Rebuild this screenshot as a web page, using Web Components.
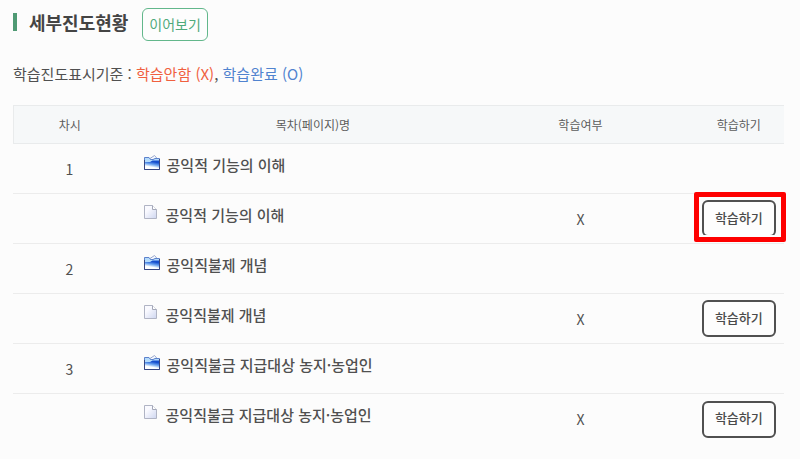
<!DOCTYPE html>
<html lang="ko">
<head>
<meta charset="utf-8">
<meta name="viewport" content="width=device-width, initial-scale=1">
<title>세부진도현황</title>
<style>
body {
    margin: 0;
    background: #fcfcfc;
    color: #505050;
    font-family: "Noto Sans CJK KR", "Noto Sans", sans-serif;
}
.missed { color: #f0603f; }
.done { color: #5083cf; }
</style>
</head>
<body>
<progress-page>
    <section-heading slot="heading">
        세부진도현황
        <outline-button slot="action" tone="green">이어보기</outline-button>
    </section-heading>
    <span slot="legend">학습진도표시기준 : <span class="missed">학습안함 (X)</span>, <span class="done">학습완료 (O)</span></span>
    <lesson-table></lesson-table>
</progress-page>

<script>
class ProgressPage extends HTMLElement {
    constructor() {
        super();
        this.attachShadow({ mode: "open" });
        this.shadowRoot.innerHTML = `
        <style>
        :host {
            display: block;
            padding: 8px 16px 12px 13px;
        }
        p {
            margin: 21px 0 19px;
            font-size: 15px;
            line-height: 24px;
        }
        </style>
        <slot name="heading"></slot>
        <p><slot name="legend"></slot></p>
        <slot></slot>
        `;
    }
}

class SectionHeading extends HTMLElement {
    constructor() {
        super();
        this.attachShadow({ mode: "open" });
        this.shadowRoot.innerHTML = `
        <style>
        :host {
            display: flex;
            align-items: flex-start;
            gap: 14px;
        }
        h2 {
            display: flex;
            align-items: center;
            gap: 12px;
            margin: 0;
            color: #444;
            font-size: 18px;
            font-weight: 700;
            line-height: 28px;
        }
        h2::before {
            content: "";
            width: 4px;
            height: 18px;
            background: #4f9a74;
        }
        </style>
        <h2><span><slot></slot></span></h2>
        <slot name="action"></slot>
        `;
    }
}

class OutlineButton extends HTMLElement {
    constructor() {
        super();
        this.attachShadow({ mode: "open" });
        this.shadowRoot.innerHTML = `
        <style>
        :host {
            display: inline-block;
            position: relative;
            vertical-align: middle;
        }
        button {
            display: block;
            box-sizing: border-box;
            height: 37px;
            padding: 0 11px 2px;
            border: 2px solid #505050;
            border-radius: 6px;
            background: #fdfdfd;
            color: #4a4a4a;
            font: 500 13px/20px "Noto Sans CJK KR", "Noto Sans", sans-serif;
            white-space: nowrap;
            cursor: pointer;
        }
        :host([tone="green"]) button {
            height: 33px;
            padding: 0 6px 2px;
            border: 1px solid #62b78b;
            color: #4faa7b;
            font-size: 14px;
            font-weight: 400;
        }
        /* red frame that calls out the next lesson */
        :host([marked])::after {
            content: "";
            position: absolute;
            inset: -8px -10px -5px -8px;
            border: 5px solid #fe0000;
            border-radius: 2px;
            box-shadow: inset 0 -2px #fdfdfd;
            pointer-events: none;
        }
        </style>
        <button type="button"><slot></slot></button>
        `;
    }
}

class LessonIcon extends HTMLElement {
    constructor() {
        super();
        this.attachShadow({ mode: "open" });
    }

    connectedCallback() {
        const folder = `
        <svg width="16" height="16" viewBox="0 0 16 16">
            <defs>
                <linearGradient id="blue" x1="0.3" y1="1" x2="0.6" y2="0">
                    <stop offset="0.25" stop-color="#ffffff"/>
                    <stop offset="0.55" stop-color="#6fa6f0"/>
                    <stop offset="0.85" stop-color="#174fce"/>
                </linearGradient>
            </defs>
            <path d="M4.5 4.5 L10.5 0.5 L14 4.5 Z" fill="#f7faff" stroke="#9aa8ce"/>
            <path d="M0.5 14.5 V2.5 H5 L6.5 4.5 H9 L11 3.5 H15.5 V14.5 Z" fill="#b5dbfb" stroke="#5d82cc"/>
            <path d="M1 7 H6 L8.5 5.5 H15 V14 H1 Z" fill="url(#blue)"/>
            <path d="M0.5 5 V14.5 H15.5 V4" fill="none" stroke="#374681"/>
        </svg>`;
        const file = `
        <svg width="14" height="16" viewBox="0 0 14 16">
            <defs>
                <linearGradient id="paper" x1="0" y1="0" x2="1" y2="1">
                    <stop offset="0.3" stop-color="#fafaff"/>
                    <stop offset="1" stop-color="#ced6f0"/>
                </linearGradient>
            </defs>
            <path d="M0.5 0.5 H8.5 L12.5 4.5 V13.5 H0.5 Z" fill="url(#paper)" stroke="#b0b4c4"/>
            <path d="M8.5 0.5 V4.5 H12.5" fill="#fff" stroke="#a4a8b8"/>
        </svg>`;
        this.shadowRoot.innerHTML = `
        <style>
        :host { display: block; flex: none; }
        svg { display: block; }
        </style>
        ${this.getAttribute("kind") === "folder" ? folder : file}
        `;
    }
}

class LessonTable extends HTMLElement {
    constructor() {
        super();
        this.attachShadow({ mode: "open" });
        this.lessons = [
            { title: "공익적 기능의 이해", state: "X", marked: true },
            { title: "공익직불제 개념", state: "X" },
            { title: "공익직불금 지급대상 농지·농업인", state: "X" },
        ];
        this.shadowRoot.innerHTML = `
        <style>
        :host { display: block; }
        table {
            width: 100%;
            table-layout: fixed;
            border-collapse: separate;
            border-spacing: 0;
        }
        .no { width: 14.6%; }
        .name { width: 48.6%; }
        .state { width: 20.8%; }
        th, td {
            box-sizing: border-box;
            padding: 0;
            text-align: center;
            vertical-align: middle;
        }
        th {
            height: 39px;
            border: solid #e9ebec;
            border-width: 1px 0;
            background: #f6f8f9;
            color: #5c5c5c;
            font-size: 12px;
            font-weight: 400;
            line-height: 20px;
        }
        th:first-child { border-left-width: 1px; }
        th:last-child, td:last-child { padding-left: 33px; }
        td {
            height: 50px;
            border-bottom: 1px solid #ececec;
            font-size: 14px;
            line-height: 20px;
        }
        tr:last-child td { border-bottom: 0; }
        td.title {
            padding: 10px 0 0 18px;
            vertical-align: top;
        }
        .title div {
            display: flex;
            gap: 7px;
            font-size: 15px;
            font-weight: 500;
            line-height: 22px;
        }
        lesson-icon { padding-top: 1px; }
        lesson-icon[kind="file"] { padding-right: 1px; }
        </style>
        <table>
            <colgroup><col class="no"><col class="name"><col class="state"><col></colgroup>
            <thead>
                <tr><th>차시</th><th>목차(페이지)명</th><th>학습여부</th><th>학습하기</th></tr>
            </thead>
            <tbody>${this.lessons.map((lesson, i) => this.rows(lesson, i + 1)).join("")}</tbody>
        </table>
        `;
    }

    // each lesson is a folder row followed by its page row
    rows(lesson, number) {
        return `
        <tr>
            <td>${number}</td>
            <td class="title"><div><lesson-icon kind="folder"></lesson-icon>${lesson.title}</div></td>
            <td></td>
            <td></td>
        </tr>
        <tr>
            <td></td>
            <td class="title"><div><lesson-icon kind="file"></lesson-icon>${lesson.title}</div></td>
            <td>${lesson.state}</td>
            <td><outline-button ${lesson.marked ? "marked" : ""}>학습하기</outline-button></td>
        </tr>`;
    }
}

customElements.define("progress-page", ProgressPage);
customElements.define("section-heading", SectionHeading);
customElements.define("outline-button", OutlineButton);
customElements.define("lesson-icon", LessonIcon);
customElements.define("lesson-table", LessonTable);
</script>
</body>
</html>
